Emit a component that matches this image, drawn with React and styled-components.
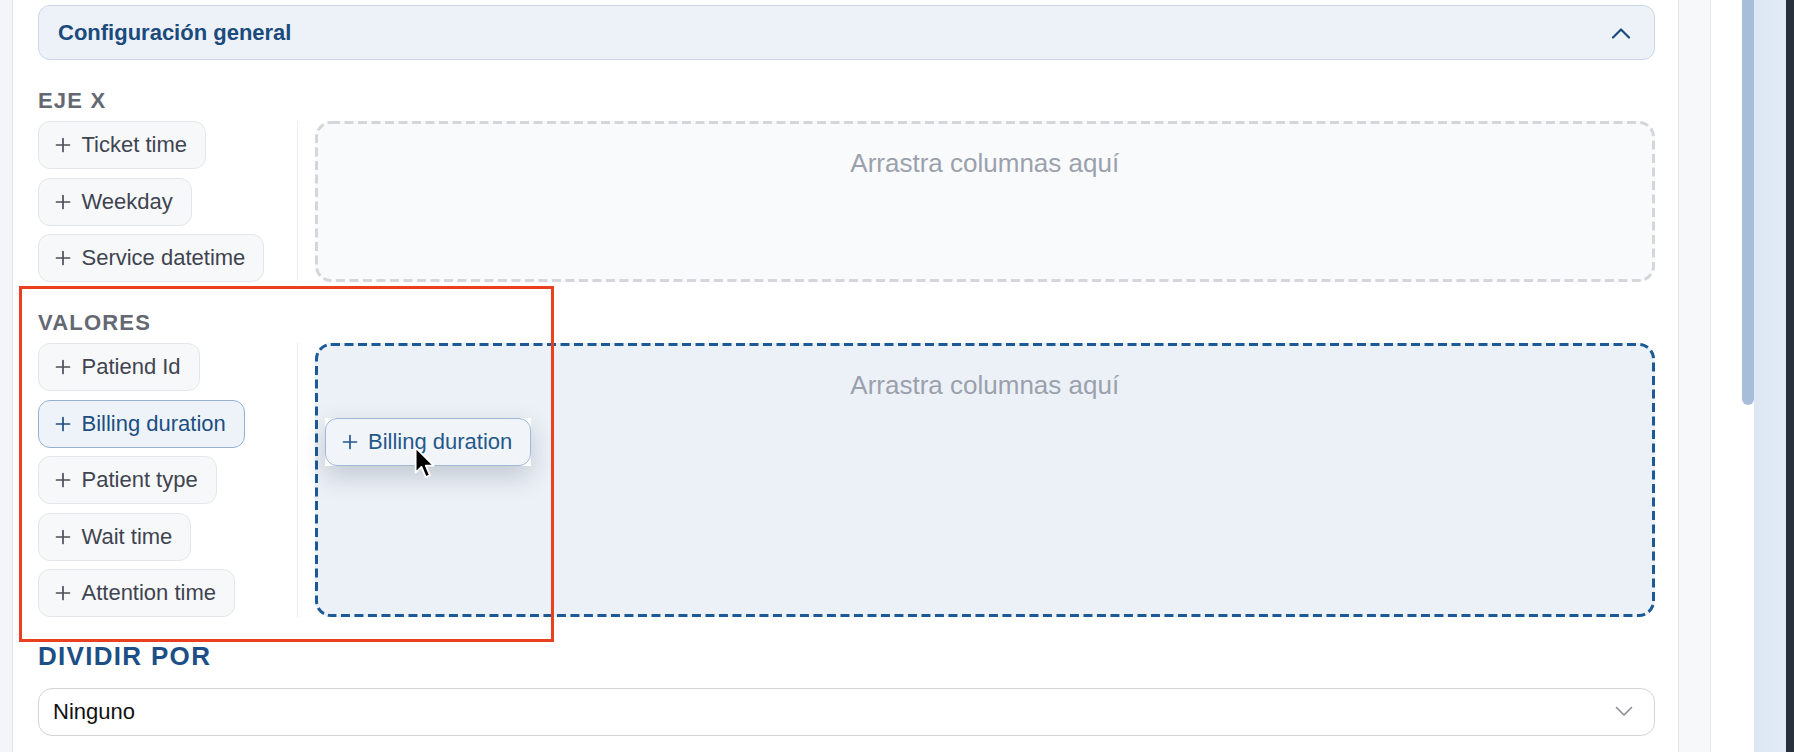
import React from 'react';
import styled, {createGlobalStyle} from 'styled-components';

const GlobalStyle = createGlobalStyle`
    html, body {
        margin: 0;
        padding: 0;
        height: 100%;
        overflow: hidden;
        background: #ffffff;
        font-family: "Liberation Sans", Arial, Helvetica, sans-serif;
    }
    #root {
        height: 100%;
    }
`

// dashed outline drawn as background so the dashes can be longer than the browser's
const dashes = (color) =>
    `url("data:image/svg+xml,%3Csvg xmlns='http://www.w3.org/2000/svg' width='100%25' height='100%25'%3E%3Crect width='100%25' height='100%25' fill='none' rx='16' ry='16' stroke='${color.replace('#', '%23')}' stroke-width='6' stroke-dasharray='9%2C 4.5'/%3E%3C/svg%3E")`

const Page = styled.div`
    display: flex;
    flex-direction: row;
    width: 100%;
    height: 752px;
`

const LeftGutter = styled.div`
    width: 12px;
    flex-shrink: 0;
    background-color: #f3f5f8;
    border-right: 1px solid #e2e5e9;
`

const Panel = styled.div`
    position: relative;
    flex: 1;
    min-width: 0;
    padding: 5px 23px 0 25px;
    border-right: 1px solid #e3e5e9;
    background-color: #ffffff;
`

const SideStrip = styled.div`
    width: 31px;
    flex-shrink: 0;
    background-color: #f7f8fa;
    border-right: 1px solid #e6e8eb;
`

const WhiteGap = styled.div`
    width: 31px;
    flex-shrink: 0;
    background-color: #ffffff;
`

const ScrollTrack = styled.div`
    width: 12px;
    flex-shrink: 0;
    background-color: #ffffff;
`

const ScrollThumb = styled.div`
    height: 405px;
    background-color: #a7bedb;
    border-radius: 0 0 6px 6px;
`

const BlueBand = styled.div`
    width: 32px;
    flex-shrink: 0;
    background: linear-gradient(90deg, #dce7f3, #e2ebf6);
`

const DarkEdge = styled.div`
    width: 8px;
    flex-shrink: 0;
    background-color: #29313d;
`

const AccordionHeader = styled.div`
    display: flex;
    align-items: center;
    justify-content: space-between;
    height: 55px;
    box-sizing: border-box;
    padding: 0 23px 0 19px;
    background-color: #edf2f8;
    border: 1.5px solid #cbd7e5;
    border-radius: 12px;
`

const HeaderTitle = styled.span`
    font-size: 22px;
    font-weight: 700;
    color: #1b4a7c;
`

const Section = styled.div`
    margin-top: ${props => props.top}px;
`

const SectionLabel = styled.div`
    font-size: 22px;
    line-height: 26px;
    font-weight: 700;
    letter-spacing: 1.2px;
    color: #646873;
    margin-bottom: 7px;
`

const Row = styled.div`
    display: flex;
    flex-direction: row;
    gap: 16.5px;
`

const ChipColumn = styled.div`
    width: 259px;
    flex-shrink: 0;
    display: flex;
    flex-direction: column;
    align-items: flex-start;
    gap: 8.5px;
    border-right: 1px solid #eceef1;
`

const Chip = styled.div`
    display: inline-flex;
    align-items: center;
    gap: 10.5px;
    height: 48px;
    box-sizing: border-box;
    padding: 0 18px 0 16px;
    border-radius: 12px;
    border: 1.5px solid ${props => props.active ? '#95b1d1' : '#e3e6ea'};
    background-color: ${props => props.active ? '#edf3f9' : '#f7f8fa'};
    color: ${props => props.active ? '#1c4e81' : '#3f4450'};
    font-size: 22px;
    white-space: nowrap;
`

const DropZone = styled.div`
    position: relative;
    flex: 1;
    box-sizing: border-box;
    padding-top: 27px;
    border-radius: 16px;
    background-color: ${props => props.active ? '#ecf1f7' : '#f9fafc'};
    background-image: ${props => dashes(props.active ? '#1c5a97' : '#d4d6da')};
    text-align: center;
    font-size: 26px;
    line-height: 31px;
    color: #9ba1ac;
`

const DragGhost = styled.div`
    position: absolute;
    left: 10px;
    top: 75px;
    background-color: #ffffff;
    box-shadow: 0 10px 26px rgba(25, 35, 55, 0.2);
    text-align: left;
    line-height: normal;
`

const GhostChip = styled(Chip)`
    background-color: #f1f5fa;
    border-color: #9eb8d5;
    color: #25588a;
`

const Cursor = styled.svg`
    position: absolute;
    left: 89px;
    top: 28px;
`

const SplitLabel = styled.div`
    margin-top: 23.5px;
    font-size: 26px;
    line-height: 30px;
    font-weight: 700;
    letter-spacing: 1.3px;
    color: #1b4f86;
`

const Select = styled.div`
    margin-top: 17px;
    display: flex;
    align-items: center;
    justify-content: space-between;
    height: 48px;
    box-sizing: border-box;
    padding: 0 21px 0 14px;
    border: 1.5px solid #d2d4d8;
    border-radius: 14px;
    background-color: #ffffff;
    font-size: 22px;
    color: #111111;
`

const Annotation = styled.div`
    position: absolute;
    left: 6px;
    top: 286px;
    width: 535px;
    height: 356px;
    box-sizing: border-box;
    border: 3px solid #e9411f;
    pointer-events: none;
`

const PlusIcon = ({color}) => (
    <svg width="16" height="16" viewBox="0 0 16 16">
        <path d="M8 1.5v13M1.5 8h13" stroke={color} strokeWidth="1.7" strokeLinecap="round" fill="none" />
    </svg>
)

const ChipItem = ({label, active}) => (
    <Chip active={active}>
        <PlusIcon color={active ? '#1c4e81' : '#4a4f5a'} />
        {label}
    </Chip>
)

const ejeX = ['Ticket time', 'Weekday', 'Service datetime'];
const valores = ['Patiend Id', 'Billing duration', 'Patient type', 'Wait time', 'Attention time'];

const App = () => {
    return (
        <Page>
            <GlobalStyle />
            <LeftGutter />
            <Panel>
                <AccordionHeader>
                    <HeaderTitle>Configuración general</HeaderTitle>
                    <svg width="20" height="12" viewBox="0 0 20 12">
                        <polyline points="2,10.5 10,2.5 18,10.5" stroke="#1b4a7c" strokeWidth="2.2" fill="none" strokeLinecap="round" strokeLinejoin="round" />
                    </svg>
                </AccordionHeader>

                <Section top={28}>
                    <SectionLabel>EJE X</SectionLabel>
                    <Row>
                        <ChipColumn>
                            {ejeX.map((item) => <ChipItem key={item} label={item} />)}
                        </ChipColumn>
                        <DropZone>Arrastra columnas aquí</DropZone>
                    </Row>
                </Section>

                <Section top={28}>
                    <SectionLabel>VALORES</SectionLabel>
                    <Row>
                        <ChipColumn>
                            {valores.map((item) => (
                                <ChipItem key={item} label={item} active={item === 'Billing duration'} />
                            ))}
                        </ChipColumn>
                        <DropZone active>
                            Arrastra columnas aquí
                            <DragGhost>
                                <GhostChip>
                                    <PlusIcon color="#25588a" />
                                    Billing duration
                                </GhostChip>
                                <Cursor width="21" height="33" viewBox="0 0 13 20.5">
                                    <path d="M1 1 L1 16.5 L4.6 13 L7.3 19.3 L9.9 18.2 L7.3 12.2 L12.2 12.2 Z" fill="#000" stroke="#fff" strokeWidth="1.1" strokeLinejoin="round" />
                                </Cursor>
                            </DragGhost>
                        </DropZone>
                    </Row>
                </Section>

                <SplitLabel>DIVIDIR POR</SplitLabel>
                <Select>
                    <span>Ninguno</span>
                    <svg width="18" height="11" viewBox="0 0 18 11">
                        <polyline points="1.5,1.5 9,9 16.5,1.5" stroke="#8a8d92" strokeWidth="1.6" fill="none" strokeLinecap="round" strokeLinejoin="round" />
                    </svg>
                </Select>

                <Annotation />
            </Panel>
            <SideStrip />
            <WhiteGap />
            <ScrollTrack>
                <ScrollThumb />
            </ScrollTrack>
            <BlueBand />
            <DarkEdge />
        </Page>
    )
}

export default App
